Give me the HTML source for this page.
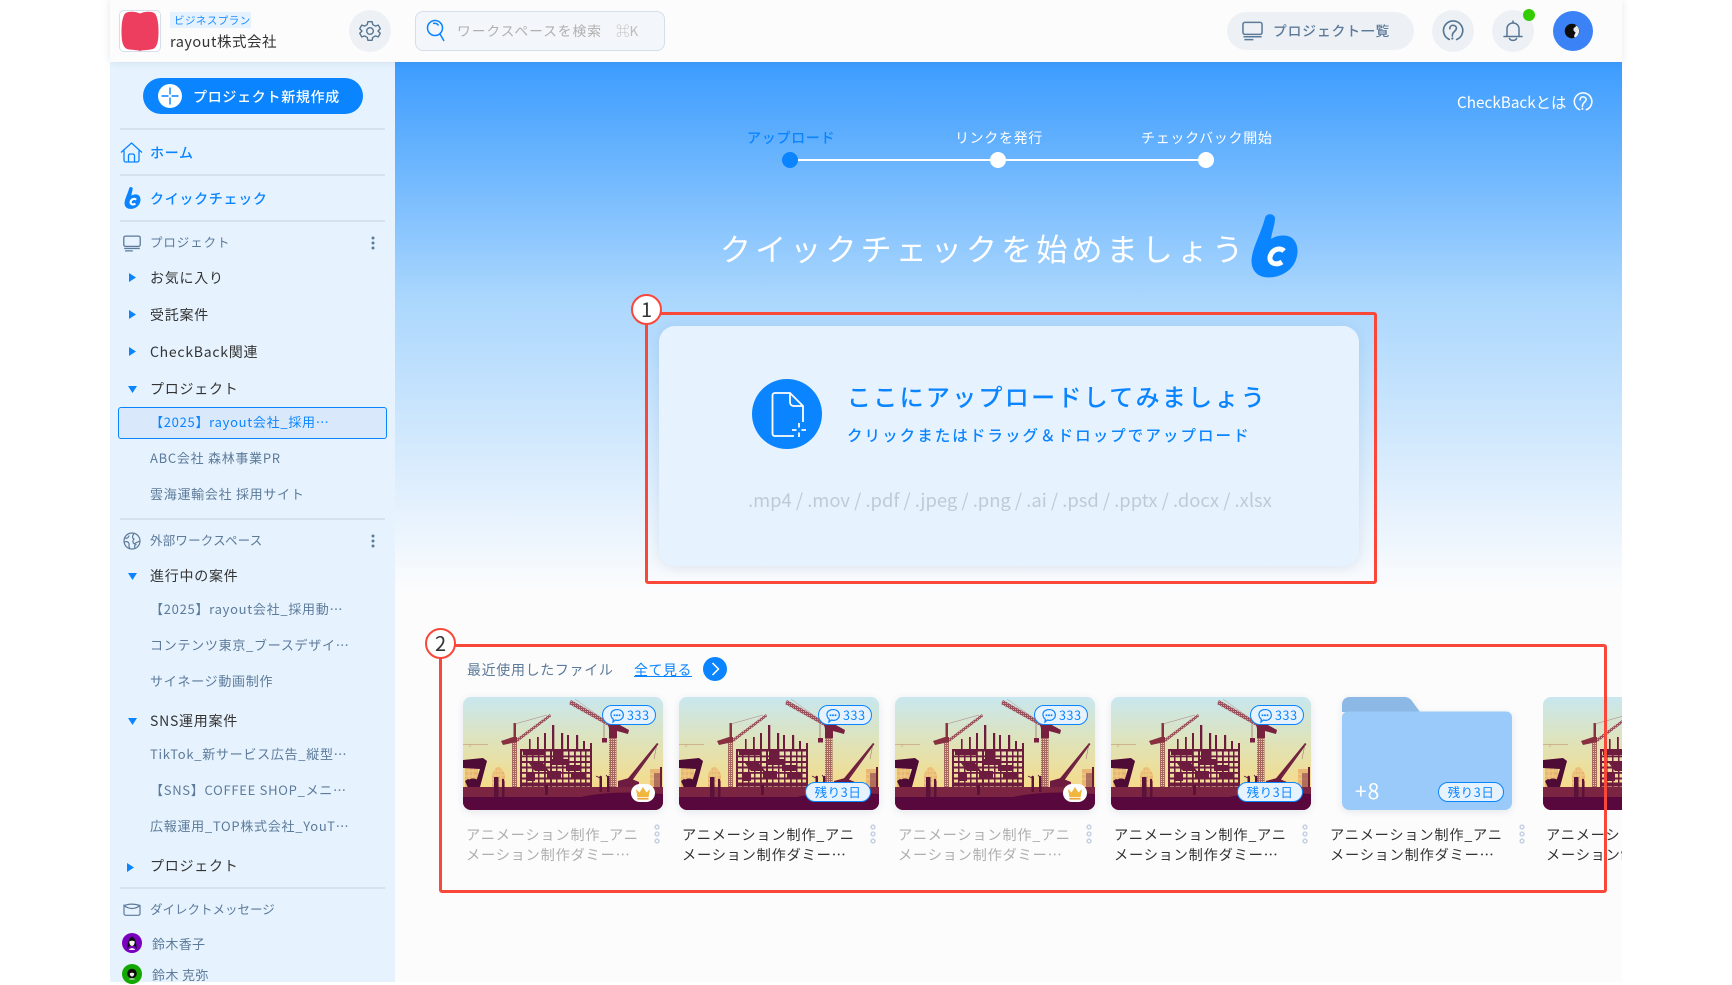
<!DOCTYPE html>
<html lang="ja"><head><meta charset="utf-8"><title>CheckBack</title>
<style>
html,body{margin:0;padding:0;background:#fff;}
body{width:1732px;height:982px;overflow:hidden;position:relative;font-family:"Noto Sans CJK JP","Liberation Sans",sans-serif;color:#333;}
.a{position:absolute;}
.t{position:absolute;white-space:nowrap;line-height:20px;height:20px;}
#side{left:110px;top:0;width:285px;height:982px;background:#e6f3ff;}
#main{left:395px;top:62px;width:1227px;height:920px;overflow:hidden;background:linear-gradient(180deg,#3c9cff 0,#abd7fd 238px,#fcfcfd 530px);}
#head{left:110px;top:0;width:1512px;height:62px;background:#fcfcfd;box-shadow:0 0 8px rgba(60,80,110,.14);}
.div{position:absolute;left:120px;width:265px;height:2px;background:#d5e1ee;}
.sec{font-size:12.5px;color:#5c7a99;letter-spacing:.9px;left:150px;}
.tree{font-size:14px;color:#333;letter-spacing:.75px;left:150px;font-weight:400;}
.leaf{font-size:13px;color:#5c7a99;letter-spacing:.72px;left:150px;}
.ac{font-size:14px;color:#0a84ff;letter-spacing:.7px;left:150px;font-weight:500;}
.round{position:absolute;border-radius:50%;background:#edf1f5;width:42px;height:42px;}
.redbox{position:absolute;border:3px solid #f9473a;border-radius:3px;box-sizing:border-box;}
.num{position:absolute;width:31px;height:31px;box-sizing:border-box;border-radius:50%;background:#fff;border:2.5px solid #f9473a;text-align:center;line-height:25px;font-size:20px;color:#333;}
.thumb{position:absolute;top:697px;width:200px;height:113px;border-radius:8px;overflow:hidden;box-shadow:0 2px 8px rgba(60,80,110,.12);}
.thumb svg{display:block;}
.name{position:absolute;top:825px;width:178px;font-size:14.2px;line-height:20px;letter-spacing:.8px;color:#333;}
.gray{color:#aeaeae;}
.b333{position:absolute;top:705px;height:20px;box-sizing:border-box;width:54px;border:1px solid #0a84ff;border-radius:10px;background:#e6f3ff;color:#0a84ff;font-size:12.5px;line-height:18px;letter-spacing:.6px;padding-left:24px;}
.b333 svg{position:absolute;left:6px;top:1.5px;}
.brem{position:absolute;top:782px;height:20px;width:66px;box-sizing:border-box;border:1px solid #0a84ff;border-radius:10px;background:#e6f3ff;color:#0a84ff;font-size:12.5px;line-height:18px;letter-spacing:.6px;text-align:center;}
.crown{position:absolute;top:784px;width:24px;height:18px;background:#fff;border-radius:9px;}
.dm{position:absolute;width:6px;height:20px;}
</style></head><body>
<svg width="0" height="0" style="position:absolute">
<defs>
<linearGradient id="sky" x1="0" y1="0" x2="0" y2="1"><stop offset="0" stop-color="#c8e7ef"/><stop offset=".4" stop-color="#dfe3b9"/><stop offset=".78" stop-color="#f4dc8c"/></linearGradient>
<pattern id="lat" width="2" height="2" patternUnits="userSpaceOnUse"><rect width="2" height="2" fill="#a5685f"/><rect width="1" height="1" fill="#e8cf9a"/></pattern>
<pattern id="latd" width="2" height="2" patternUnits="userSpaceOnUse"><rect width="2" height="2" fill="#98505a"/><rect width="1" height="1" fill="#cfa596"/></pattern>
<path id="bb" d="M14 5C15 0 23 0 24 5C24 12 21 18 20 26C26 22 36 21 41 25C48 31 48 42 43 51C37 61 24 66 13 64C3 62-1 53 1 43C3 32 10 20 14 5Z"/>
<symbol id="th" viewBox="0 0 200 113">
<rect width="200" height="113" fill="url(#sky)"/>
<g fill="#e7a968" opacity=".75"><path d="M29 90V78Q35 62 42 78V90Z"/><rect x="2" y="70" width="13" height="20"/><rect x="187" y="72" width="12" height="18"/></g>
<g stroke="#f4dc8c" stroke-width=".7" opacity=".9"><path d="M29 74H42M29 78H42M29 82H42M29 86H42M32 66V90M35 66V90M38 66V90M2 74H15M2 79H15M2 84H15M6 70V90M10 70V90M187 77H199M187 82H199"/></g>
<path d="M0 47.500H25M7 47.500V50" stroke="#c9a37d" stroke-width=".8"/>
<g fill="#6d1b3e">
<rect x="57" y="52" width="71" height="2.500"/><rect x="57" y="58.500" width="71" height="1.800"/><rect x="57" y="64" width="71" height="2"/><rect x="57" y="69.500" width="71" height="2"/><rect x="57" y="75" width="71" height="1.800"/><rect x="57" y="80.500" width="71" height="2"/><rect x="57" y="85.500" width="71" height="4"/>
<rect x="57" y="52" width="2" height="38"/><rect x="63" y="52" width="1.500" height="38"/><rect x="69" y="52" width="1.500" height="38"/><rect x="75" y="52" width="1.500" height="38"/><rect x="81" y="52" width="1.800" height="38"/><rect x="87" y="52" width="2" height="38"/><rect x="93" y="52" width="1.500" height="38"/><rect x="99" y="52" width="1.500" height="38"/><rect x="105" y="52" width="1.500" height="38"/><rect x="111" y="52" width="1.800" height="38"/><rect x="117" y="52" width="1.500" height="38"/><rect x="122" y="52" width="1.500" height="38"/><rect x="127" y="52" width="2" height="38"/>
<path d="M60 53H82V58H60ZM88 62H106V68H88ZM66 66H80L86 74H72ZM103 68H118V74H103ZM84 74H98V82H84ZM108 76H122V82H108ZM90 53H100V62H90ZM64 76H72V84H64Z"/>
<rect x="66" y="42" width="1.600" height="10"/><rect x="74" y="40" width="1.800" height="12"/><rect x="81" y="36" width="2" height="16"/><rect x="89" y="28" width="2.300" height="24"/><rect x="98" y="36" width="2.200" height="16"/><rect x="104" y="38" width="2" height="14"/><rect x="113" y="38" width="2.200" height="14"/><rect x="120" y="44" width="2" height="8"/><rect x="127" y="46" width="2" height="6"/>
</g>
<rect x="49" y="44" width="5" height="46" fill="url(#lat)"/>
<path d="M52 43L87 17L88 19.500L53 46Z" fill="url(#latd)"/>
<path d="M38 44L50 40H54V45L40 48Z" fill="#88303f"/><rect x="50.500" y="26" width="2.500" height="16" fill="#88303f"/>
<path d="M52 27L84 18" stroke="#a97a75" stroke-width=".5"/>
<rect x="146" y="40" width="7.500" height="50" fill="url(#lat)"/>
<path d="M108 3L150 27L149 31L106 7Z" fill="url(#latd)"/>
<path d="M145 27H155L166 33L165 37L154 34V41H146V32Z" fill="#78203f"/>
<path d="M141 18V42" stroke="#8a4a50" stroke-width=".6"/><rect x="139" y="41" width="5" height="4.500" fill="#78203f"/>
<path d="M112 2L147 27" stroke="#a97a75" stroke-width=".4"/>
<path d="M162 85L194 46L195.500 47L166 88Z" fill="#6d1b3e"/><path d="M155 84L166 81L176 85V90H155Z" fill="#6d1b3e"/><path d="M194 47L191 62M170 80L194 47" stroke="#8a4a50" stroke-width=".4"/>
<rect x="197" y="70" width="2" height="20" fill="#6d1b3e"/><rect x="191" y="76" width="6" height="14" fill="#88404a" opacity=".6"/>
<path d="M0 63L20 61L24 64L17 90L6 93L2 84L5 82L13 85L17 72L0 71Z" fill="#4d0b35"/>
<path d="M4 84Q10 79 16 84L14 92H6Z" fill="#4d0b35"/>
<g fill="#5a1239"><rect x="31" y="80" width="4.500" height="12"/><rect x="39" y="84" width="2.500" height="8"/><circle cx="40" cy="83" r="1.200"/><rect x="136.500" y="81" width="2.500" height="10"/><circle cx="137.700" cy="80" r="1.300"/><rect x="144" y="81" width="2.500" height="10"/><circle cx="145.200" cy="80" r="1.300"/><path d="M139 82L133 79M146 82L143 78" stroke="#5a1239" stroke-width=".8"/><rect x="82" y="88" width="3" height="9"/><rect x="56" y="92" width="3" height="6"/></g>
<rect y="90" width="200" height="23" fill="#7b2542"/>
<path d="M0 100H118Q150 93 200 97V113H0Z" fill="#58083c"/>
<g fill="#5a1239"><rect x="31" y="84" width="4.500" height="16"/><rect x="82" y="90" width="3" height="8"/><rect x="39" y="88" width="2.500" height="12"/><rect x="136.500" y="86" width="2.500" height="9"/><rect x="144" y="86" width="2.500" height="9"/></g>
</symbol>
<symbol id="chat" viewBox="0 0 16 16"><path d="M3 3.500C6 .8 11 1 13.300 3.800C15.200 6.500 14.500 10 11.600 11.600C9.800 12.600 8 12.500 6.300 12L4 14L4.300 11.200C1.600 9.200 1.300 5.400 3 3.500Z" fill="none" stroke="#0a84ff" stroke-width="1.200"/><circle cx="5.500" cy="7.200" r="1" fill="#0a84ff"/><circle cx="8" cy="7.200" r="1" fill="#0a84ff"/><circle cx="10.500" cy="7.200" r="1" fill="#0a84ff"/></symbol>
<symbol id="vd" viewBox="0 0 6 20"><g fill="none" stroke="#c6d1e4" stroke-width="1.500"><circle cx="3" cy="3" r="1.900"/><circle cx="3" cy="10" r="1.900"/><circle cx="3" cy="17" r="1.900"/></g></symbol>
<symbol id="help" viewBox="0 0 24 24"><path d="M8 21.200A10.500 10.500 0 1 1 16 21.300" fill="none" stroke="currentColor" stroke-width="1.800" stroke-linecap="round"/><path d="M8.500 9.500C8.500 7 10 5.800 12 5.800C14.300 5.800 15.700 7.300 15.700 9.200C15.700 11.800 12.400 12.200 11.500 15.500C11.300 16.300 11.300 17 11.300 17.500" fill="none" stroke="currentColor" stroke-width="1.800" stroke-linecap="round"/><circle cx="11.300" cy="20.200" r="1.200" fill="currentColor"/></symbol>
<symbol id="mon" viewBox="0 0 22 20"><rect x="1" y="1" width="20" height="12.500" rx="2" fill="none" stroke="currentColor" stroke-width="1.600"/><path d="M1.500 16H20.500M2.500 19H12" stroke="currentColor" stroke-width="1.600" fill="none"/></symbol>
<symbol id="kebab" viewBox="0 0 4 14"><circle cx="2" cy="2" r="1.500" fill="#5c7a99"/><circle cx="2" cy="7" r="1.500" fill="#5c7a99"/><circle cx="2" cy="12" r="1.500" fill="#5c7a99"/></symbol>
<symbol id="ar" viewBox="0 0 7 9"><path d="M0 0L7 4.500L0 9Z" fill="#0a84ff"/></symbol>
<symbol id="ad" viewBox="0 0 9 7"><path d="M0 0H9L4.500 7Z" fill="#0a84ff"/></symbol>
<symbol id="cr" viewBox="0 0 16 14"><path d="M1 3L4.500 6.500L8 1L11.500 6.500L15 3L13.600 11H2.400Z" fill="#f1b63c"/><rect x="2.400" y="11.800" width="11.200" height="1.800" fill="#eaa53a"/></symbol>
</defs></svg>

<div id="side" class="a"></div>
<div id="main" class="a">
 <div class="a" style="left:395px;top:97px;width:416px;height:2px;background:#fff"></div>
 <div class="a" style="left:387px;top:90px;width:16px;height:16px;border-radius:50%;background:#0a84ff"></div>
 <div class="a" style="left:595px;top:90px;width:16px;height:16px;border-radius:50%;background:#fff"></div>
 <div class="a" style="left:803px;top:90px;width:16px;height:16px;border-radius:50%;background:#fff"></div>
</div>
<div id="head" class="a"></div>

<div class="a" style="left:119px;top:10px;width:42px;height:42px;box-sizing:border-box;border:1px solid #d5deea;border-radius:5px;background:#fff"></div>
<svg class="a" style="left:120px;top:11px" width="40" height="40" viewBox="0 0 40 40"><path d="M20 2.500C15 .2 8 .2 5 2.500C2 7 1.500 14 1.500 21C1.500 29 2.500 35 6 37.500C10 39.500 16 38.500 20 40C24 38.500 30 39.500 34 37.500C37.500 35 38.500 29 38.500 21C38.500 14 38 7 35 2.500C32 .2 25 .2 20 2.500Z" fill="#ee3e5f"/></svg>
<div class="a" style="left:170px;top:12px;width:81px;height:16px;background:#e6f3ff"></div>
<div class="t" style="left:174px;top:11px;font-size:10.500px;color:#1a8cff;letter-spacing:.45px">ビジネスプラン</div>
<div class="t" style="left:170px;top:32px;font-size:14.500px;color:#333;letter-spacing:.5px">rayout株式会社</div>
<div class="round" style="left:349px;top:10px"></div>
<svg class="a" style="left:359px;top:20px" width="22" height="22" viewBox="0 0 24 24" fill="none" stroke="#567593" stroke-width="1.500" stroke-linejoin="round"><path d="M9.700 1.800H14.300L15 5L17.800 6.600L21 5.600L23.200 9.500L20.800 11.900V12.100L23.200 14.500L21 18.400L17.800 17.400L15 19L14.300 22.200H9.700L9 19L6.200 17.400L3 18.400L.8 14.500L3.200 12.100V11.900L.8 9.500L3 5.600L6.200 6.600L9 5Z"/><circle cx="12" cy="12" r="3.600"/></svg>

<div class="a" style="left:415px;top:11px;width:250px;height:40px;box-sizing:border-box;border:1px solid #d5deea;border-radius:8px;background:#f3f6fa"></div>
<svg class="a" style="left:425px;top:18px" width="22" height="24" viewBox="0 0 22 24" fill="none" stroke="#0a84ff" stroke-width="1.500"><circle cx="10" cy="10" r="7.500"/><path d="M15 16L19 23M8 5.500C10 4.800 12.500 5.500 13.500 7.500"/></svg>
<div class="t" style="left:457px;top:20px;font-size:13.800px;color:#b0b0b0;letter-spacing:.9px">ワークスペースを検索</div>
<div class="t" style="left:616px;top:20px;font-size:13.500px;color:#bdbdbd">⌘K</div>

<div class="a" style="left:1227px;top:12px;width:187px;height:38px;border-radius:19px;background:#edf1f5"></div>
<svg class="a" style="left:1242px;top:21px;color:#5c7a99" width="21" height="20"><use href="#mon"/></svg>
<div class="t" style="left:1273px;top:20px;font-size:13.800px;color:#5c7a99;letter-spacing:.85px;font-weight:500">プロジェクト一覧</div>
<div class="round" style="left:1432px;top:10px"></div>
<svg class="a" style="left:1442px;top:20px;color:#567593" width="22" height="22"><use href="#help"/></svg>
<div class="round" style="left:1492px;top:10px"></div>
<svg class="a" style="left:1503px;top:20px" width="20" height="22" viewBox="0 0 20 22" fill="none" stroke="#567593" stroke-width="1.500" stroke-linecap="round"><path d="M10 1V3M4 16V9C4 5.500 6.500 3 10 3C13.500 3 16 5.500 16 9V16M1 16.500H19M6.500 18.500C7.500 21 12.500 21 13.500 18.500"/></svg>
<div class="a" style="left:1523px;top:9px;width:12px;height:12px;border-radius:50%;background:#33cc00"></div>
<div class="a" style="left:1553px;top:11px;width:40px;height:40px;border-radius:50%;background:#3b82f6"></div>
<svg class="a" style="left:1564px;top:22px" width="18" height="18" viewBox="0 0 18 18"><circle cx="8" cy="9" r="7.300" fill="#0d0d0d"/><path d="M11.500 3.500C14 4 15.500 7 15 10C14.500 13 12.500 15.500 10.500 15.500C10 14 10 13 11 12C11.800 10 12.300 6 11.500 3.500Z" fill="#f2f2f2"/><circle cx="12" cy="7.500" r="2.600" fill="#e8e8e8"/></svg>

<div class="a" style="left:143px;top:78px;width:220px;height:36px;border-radius:18px;background:#0a84ff"></div>
<div class="a" style="left:158px;top:84px;width:24px;height:24px;border-radius:50%;background:#fff"></div>
<svg class="a" style="left:158px;top:84px" width="24" height="24"><path d="M12 3.500V10.500M12 13.500V20.500M3.500 12H10.500M13.500 12H20.500" stroke="#0a84ff" stroke-width="1.400"/></svg>
<div class="t" style="left:193px;top:87px;font-size:14px;color:#fff;letter-spacing:.7px;font-weight:500">プロジェクト新規作成</div>
<div class="div" style="top:128px"></div>
<svg class="a" style="left:120px;top:142px" width="23" height="21" viewBox="0 0 23 21" fill="none" stroke="#0a84ff" stroke-width="1.300" stroke-linejoin="round"><path d="M1 10.500L11.500 1L22 10.500M4 8.500V18C4 19.300 4.800 20 6 20H17C18.200 20 19 19.300 19 18V8.500M8.500 20V14C8.500 12.800 9.300 12 10.500 12H12.500C13.700 12 14.500 12.800 14.500 14V20"/></svg>
<div class="t ac" style="top:143px">ホーム</div>
<div class="div" style="top:174px"></div>
<svg class="a" style="left:124px;top:186px" width="17" height="24" viewBox="-1 0 49 66"><use href="#bb" fill="#0a84ff"/><path d="M34 38C29 33 20 36 18 44C17 51 25 54 32 49" fill="none" stroke="#fff" stroke-width="6"/></svg>
<div class="t ac" style="top:189px">クイックチェック</div>
<div class="div" style="top:220px"></div>
<svg class="a" style="left:123px;top:235px;color:#5c7a99" width="18" height="17"><use href="#mon"/></svg>
<div class="t sec" style="top:232px">プロジェクト</div>
<svg class="a" style="left:371px;top:236px" width="4" height="14"><use href="#kebab"/></svg>
<svg class="a" style="left:129px;top:273px" width="7" height="9"><use href="#ar"/></svg>
<div class="t tree" style="top:268px">お気に入り</div>
<svg class="a" style="left:129px;top:310px" width="7" height="9"><use href="#ar"/></svg>
<div class="t tree" style="top:305px">受託案件</div>
<svg class="a" style="left:129px;top:347px" width="7" height="9"><use href="#ar"/></svg>
<div class="t tree" style="top:342px">CheckBack関連</div>
<svg class="a" style="left:128px;top:386px" width="9" height="7"><use href="#ad"/></svg>
<div class="t tree" style="top:379px">プロジェクト</div>
<div class="a" style="left:118px;top:407px;width:269px;height:32px;box-sizing:border-box;border:1px solid #0a84ff;border-radius:3px;background:#d9e9fb"></div>
<div class="t leaf" style="top:412px;color:#0a84ff">【2025】rayout会社_採用…</div>
<div class="t leaf" style="top:448px">ABC会社 森林事業PR</div>
<div class="t leaf" style="top:484px">雲海運輸会社 採用サイト</div>
<div class="div" style="top:518px"></div>
<svg class="a" style="left:123px;top:532px" width="18" height="18" viewBox="0 0 18 18" fill="none" stroke="#5c7a99" stroke-width="1.200"><circle cx="9" cy="9" r="8"/><path d="M2 6C4 7 6 5 6 3.500M1.500 10C4 9 6.500 10 6 13C5.800 15 6.500 16 7 16.500M11 1.500C9 4 9 6 11 7C9.500 8.500 9.500 11 11.500 12C13 10 15 10.500 16.500 9M12 16C11 14 12 12.500 13.500 12.500"/></svg>
<div class="t sec" style="top:530px;letter-spacing:.2px">外部ワークスペース</div>
<svg class="a" style="left:371px;top:534px" width="4" height="14"><use href="#kebab"/></svg>
<svg class="a" style="left:128px;top:573px" width="9" height="7"><use href="#ad"/></svg>
<div class="t tree" style="top:566px">進行中の案件</div>
<div class="t leaf" style="top:599px">【2025】rayout会社_採用動…</div>
<div class="t leaf" style="top:635px">コンテンツ東京_ブースデザイ…</div>
<div class="t leaf" style="top:671px">サイネージ動画制作</div>
<svg class="a" style="left:128px;top:718px" width="9" height="7"><use href="#ad"/></svg>
<div class="t tree" style="top:711px">SNS運用案件</div>
<div class="t leaf" style="top:744px">TikTok_新サービス広告_縦型…</div>
<div class="t leaf" style="top:780px">【SNS】COFFEE SHOP_メニ…</div>
<div class="t leaf" style="top:816px">広報運用_TOP株式会社_YouT…</div>
<svg class="a" style="left:127px;top:863px" width="7" height="9"><use href="#ar"/></svg>
<div class="t tree" style="top:856px">プロジェクト</div>
<div class="div" style="top:887px"></div>
<svg class="a" style="left:123px;top:903px" width="18" height="13" viewBox="0 0 18 13" fill="none" stroke="#5c7a99" stroke-width="1.200"><path d="M1 2.500C6 .8 12 .8 17 2.500V10.500C17 11.500 16.300 12.300 15 12.300H3C1.700 12.300 1 11.500 1 10.500V2.500C6 6.500 12 6.500 17 2.500"/></svg>
<div class="t sec" style="top:899px;letter-spacing:0">ダイレクトメッセージ</div>
<div class="a" style="left:122px;top:933px;width:20px;height:20px;border-radius:50%;background:#7a00c0"></div>
<svg class="a" style="left:125px;top:935px" width="14" height="16" viewBox="0 0 14 16"><path d="M1.500 15C3 12 2 4 7 1.500C12 4 11 12 12.500 15L9.500 11H4.500Z" fill="#0d0d0d"/><path d="M4.300 6.500C5.500 5.500 8.500 5.500 9.700 6.500C9.800 9 8.500 11 7 11C5.500 11 4.200 9 4.300 6.500ZM4 15C4.500 12.500 9.500 12.500 10 15Z" fill="#f1f1f1"/></svg>
<div class="t" style="left:152px;top:934px;font-size:13px;color:#5c7a99;letter-spacing:.35px">鈴木香子</div>
<div class="a" style="left:122px;top:964px;width:20px;height:20px;border-radius:50%;background:#12a800"></div>
<svg class="a" style="left:126px;top:968px" width="12" height="12" viewBox="0 0 12 12"><circle cx="6" cy="5.500" r="4.800" fill="#0d0d0d"/><path d="M3.800 5.500C4.500 4.500 7.500 4.500 8.200 5.500C8.200 7.500 7 8.500 6 8.500C5 8.500 3.800 7.500 3.800 5.500ZM3 11.500C3.500 9.800 8.500 9.800 9 11.500Z" fill="#eee"/></svg>
<div class="t" style="left:152px;top:965px;font-size:13px;color:#5c7a99;letter-spacing:.35px">鈴木 克弥</div>

<div class="t" style="left:1457px;top:92px;font-size:15.300px;color:#fff">CheckBackとは</div>
<svg class="a" style="left:1573px;top:92px;color:#fff" width="20" height="20"><use href="#help"/></svg>
<div class="t" style="left:747px;top:128px;font-size:14px;color:#0a84ff;letter-spacing:.7px;font-weight:500;margin-top:-.4px">アップロード</div>
<div class="t" style="left:955px;top:128px;font-size:14px;color:#fff;letter-spacing:.65px;margin-top:-.4px">リンクを発行</div>
<div class="t" style="left:1141px;top:128px;font-size:14px;color:#fff;letter-spacing:.7px;margin-top:-.4px">チェックバック開始</div>
<div class="t" style="left:720px;top:228px;height:40px;line-height:40px;font-size:31px;color:#fff;letter-spacing:4.150px">クイックチェックを始めましょう</div>
<svg class="a" style="left:1251px;top:213px" width="47" height="65" viewBox="0 0 47 65"><use href="#bb" fill="#0a84ff"/><path d="M33 38C29 34 21 36 19 44C18 50 25 53 31 49" fill="none" stroke="#fff" stroke-width="5"/></svg>

<div class="a" style="left:659px;top:326px;width:700px;height:240px;border-radius:16px;background:#e6f3ff;box-shadow:0 2px 12px rgba(60,90,130,.13)"></div>
<div class="a" style="left:752px;top:379px;width:70px;height:70px;border-radius:50%;background:#0a84ff"></div>
<svg class="a" style="left:768px;top:390px" width="40" height="48" viewBox="0 0 40 48" fill="none" stroke="#fff" stroke-width="1.800"><path d="M26 46H7C5.500 46 4.500 45 4.500 43.500V5.500C4.500 4 5.500 3 7 3H22L35 16V32"/><path d="M22 3V12C22 14.500 23.500 16 26 16H35"/><path d="M31 33V37.500M31 42.500V47M24 40H28.500M33.500 40H38"/></svg>
<div class="t" style="left:847px;top:380px;height:32px;line-height:32px;font-size:24px;color:#0a84ff;letter-spacing:2.300px;font-weight:500">ここにアップロードしてみましょう</div>
<div class="t" style="left:847px;top:425px;font-size:15.500px;color:#0a84ff;letter-spacing:2.050px;font-weight:500">クリックまたはドラッグ＆ドロップでアップロード</div>
<div class="t" style="left:748px;top:486px;height:28px;line-height:28px;font-size:18.400px;color:#bfcad9">.mp4 / .mov / .pdf / .jpeg / .png / .ai / .psd / .pptx / .docx / .xlsx</div>

<div class="t" style="left:467px;top:660px;font-size:14px;color:#5c7a99;letter-spacing:.65px">最近使用したファイル</div>
<div class="t" style="left:634px;top:660px;font-size:14px;color:#0a84ff;letter-spacing:.5px;text-decoration:underline">全て見る</div>
<div class="a" style="left:703px;top:657px;width:24px;height:24px;border-radius:50%;background:#0a84ff"></div>
<svg class="a" style="left:703px;top:657px" width="24" height="24" fill="none" stroke="#fff" stroke-width="1.500"><path d="M9.500 6L15.500 12L9.500 18"/></svg>

<div class="thumb" style="left:463px"><svg width="200" height="113"><use href="#th"/></svg></div>
<div class="thumb" style="left:679px"><svg width="200" height="113"><use href="#th"/></svg></div>
<div class="thumb" style="left:895px"><svg width="200" height="113"><use href="#th"/></svg></div>
<div class="thumb" style="left:1111px"><svg width="200" height="113"><use href="#th"/></svg></div>
<div class="a" style="left:1543px;top:697px;width:79px;height:113px;overflow:hidden;border-radius:8px 0 0 8px"><svg width="200" height="113"><use href="#th"/></svg></div>
<svg class="a" style="left:1342px;top:697px;filter:drop-shadow(0 2px 4px rgba(60,80,110,.12))" width="170" height="113" viewBox="0 0 170 113"><path d="M0 20V8C0 3 3 0 8 0H62C66 0 68 1.500 70 4L78 15H0Z" fill="#8bb8e4"/><path d="M6 14.500H164C167.500 14.500 170 17 170 20.500V105C170 110 167 113 162 113H8C3 113 0 110 0 105V20.500C0 17 2.500 14.500 6 14.500Z" fill="#99caf9"/></svg>
<div class="t" style="left:1355px;top:781px;font-size:21px;color:#fff;letter-spacing:1px">+8</div>

<div class="b333" style="left:602px"><svg width="16" height="16"><use href="#chat"/></svg>333</div>
<div class="b333" style="left:818px"><svg width="16" height="16"><use href="#chat"/></svg>333</div>
<div class="b333" style="left:1034px"><svg width="16" height="16"><use href="#chat"/></svg>333</div>
<div class="b333" style="left:1250px"><svg width="16" height="16"><use href="#chat"/></svg>333</div>
<div class="crown" style="left:631px"><svg class="a" style="left:4px;top:2px" width="16" height="14"><use href="#cr"/></svg></div>
<div class="crown" style="left:1063px"><svg class="a" style="left:4px;top:2px" width="16" height="14"><use href="#cr"/></svg></div>
<div class="brem" style="left:805px">残り3日</div>
<div class="brem" style="left:1237px">残り3日</div>
<div class="brem" style="left:1438px">残り3日</div>

<div class="name gray" style="left:466px">アニメーション制作_アニ<br>メーション制作ダミー…</div>
<div class="name" style="left:682px">アニメーション制作_アニ<br>メーション制作ダミー…</div>
<div class="name gray" style="left:898px">アニメーション制作_アニ<br>メーション制作ダミー…</div>
<div class="name" style="left:1114px">アニメーション制作_アニ<br>メーション制作ダミー…</div>
<div class="name" style="left:1330px">アニメーション制作_アニ<br>メーション制作ダミー…</div>
<div class="a" style="left:1546px;top:825px;width:76px;height:42px;overflow:hidden"><div class="name" style="left:0;top:0">アニメーション制作_アニ<br>メーション制作ダミー…</div></div>
<svg class="dm" style="left:654px;top:824px"><use href="#vd"/></svg>
<svg class="dm" style="left:870px;top:824px"><use href="#vd"/></svg>
<svg class="dm" style="left:1086px;top:824px"><use href="#vd"/></svg>
<svg class="dm" style="left:1302px;top:824px"><use href="#vd"/></svg>
<svg class="dm" style="left:1519px;top:824px"><use href="#vd"/></svg>

<div class="redbox" style="left:645px;top:312px;width:732px;height:272px"></div>
<div class="num" style="left:631px;top:294px">1</div>
<div class="redbox" style="left:439px;top:644px;width:1168px;height:249px"></div>
<div class="num" style="left:425px;top:628px">2</div>
</body></html>
